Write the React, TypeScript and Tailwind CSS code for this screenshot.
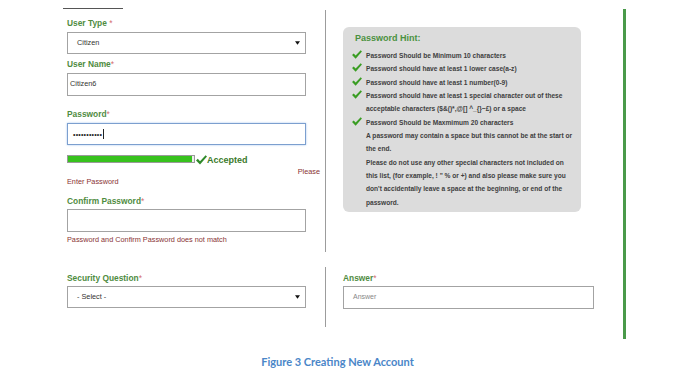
import React from "react";

const font = { fontFamily: '"Liberation Sans", Arial, sans-serif' };

const Check = ({ className }: { className?: string }) => (
	<svg viewBox="0 0 11 10" className={className}>
		<path d="M0 5.5 1.8 3.8 4 6.2 9.6 0.3 11 1.6 4 9.6Z" fill="currentColor" />
	</svg>
);

const Arrow = () => (
	<svg viewBox="0 0 6 4" className="w-[5px] h-[4px] text-[#111]">
		<path d="M0 0H6L3 4Z" fill="currentColor" />
	</svg>
);

const Label = ({ text }: { text: string }) => (
	<div className="h-[14px] leading-[14px] text-[8.4px] font-bold text-[#4f8c3f] whitespace-nowrap">
		{text}
		<span className="text-[#d46a6a] font-normal">*</span>
	</div>
);

const Select = ({ value }: { value: string }) => (
	<div className="w-[239px] h-[22px] border border-[#a3a3a3] bg-white flex items-center justify-between pl-[9px] pr-[5px]">
		<span className="text-[7.3px] text-[#333]">{value}</span>
		<Arrow />
	</div>
);

const hintItems: { check: boolean; lines: string[] }[] = [
	{ check: true, lines: ["Password Should be Minimum 10 characters"] },
	{ check: true, lines: ["Password should have at least 1 lower case(a-z)"] },
	{ check: true, lines: ["Password should have at least 1 number(0-9)"] },
	{
		check: true,
		lines: [
			"Password should have at least 1 special character out of these",
			"acceptable characters ($&()*,@[] ^_{}~£) or a space",
		],
	},
	{ check: true, lines: ["Password Should be Maxmimum 20 characters"] },
	{
		check: false,
		lines: ["A password may contain a space but this cannot be at the start or", "the end."],
	},
	{
		check: false,
		lines: [
			"Please do not use any other special characters not included on",
			"this list, (for example, ! \" % or +) and also please make sure you",
			"don't accidentally leave a space at the beginning, or end of the",
			"password.",
		],
	},
];

const App = () => {
	return (
		<div className="w-[696px] h-[373px] bg-white overflow-hidden" style={font}>
			<div className="flex">
				<div className="w-[623px]">
					{/* top part */}
					<div className="flex">
						<div className="w-[320px] pl-[67px]">
							<div className="-ml-[4px] w-[60px] h-[9px] border-b border-[#555]"></div>
							<div className="mt-[7px]">
								<div className="h-[14px] leading-[14px] text-[8.4px] font-bold text-[#4f8c3f] whitespace-nowrap">
									User Type <span className="text-[#d46a6a] font-normal">*</span>
								</div>
							</div>
							<div className="mt-[2px]">
								<Select value="Citizen" />
							</div>
							<div className="mt-[3px]">
								<Label text="User Name" />
							</div>
							<div className="mt-[2px] w-[239px] h-[23px] border border-[#a3a3a3] flex items-center pl-[2px] text-[7.3px] text-[#333]">
								Citizen6
							</div>
							<div className="mt-[11px]">
								<Label text="Password" />
							</div>
							<div className="mt-[2px] w-[239px] h-[22px] border border-[#7c9fcf] shadow-[0_0_2px_#a9c8ee] flex items-center pl-[5px]">
								<span className="text-[7px] text-[#222] tracking-[0.2px] leading-none">•••••••••••</span>
								<span className="ml-[1px] w-[1px] h-[10px] bg-[#222]"></span>
							</div>
							<div className="mt-[8px] flex items-center h-[12px]">
								<div className="w-[128px] h-[8px] border border-[#9a9a9a] bg-[#eee]">
									<div className="w-[124px] h-full bg-[#37c21d]"></div>
								</div>
								<Check className="ml-[1px] mt-[2px] w-[11px] h-[10px] text-[#2f8a2a]" />
								<span className="mt-[3px] text-[9px] font-bold text-[#3b7a2b] leading-none">Accepted</span>
							</div>
							<div className="mt-[1px] text-right text-[7.3px] text-[#8a3434] h-[12px] leading-[12px]">Please</div>
							<div className="text-[7.3px] text-[#8a3434] h-[12px] leading-[12px] mt-[-2px]">Enter Password</div>
							<div className="mt-[6px]">
								<Label text="Confirm Password" />
							</div>
							<div className="mt-[1px] w-[239px] h-[23px] border border-[#a3a3a3]"></div>
							<div className="mt-[1px] text-[7.3px] text-[#8a3434] h-[14px] leading-[14px]">
								Password and Confirm Password does not match
							</div>
						</div>
						<div className="ml-[5px] mt-[10px] h-[242px] w-[1px] bg-[#9c9c9c]"></div>
						<div className="ml-[17px] mt-[27px]">
							<div className="w-[238px] h-[185px] bg-[#dcdcdc] rounded-[6px] pl-[9px] pt-[5px]">
								<div className="ml-[3px] h-[12px] leading-[12px] text-[9px] font-bold text-[#4a9140]">
									Password Hint:
								</div>
								<div className="mt-[5px]">
									{hintItems.map((item, i) => (
										<div key={i} className="flex">
											<div className="w-[14px] shrink-0">
												{item.check && <Check className="w-[10px] h-[9px] mt-[1px] text-[#3a9d23]" />}
											</div>
											<div>
												{item.lines.map((line, j) => (
													<div
														key={j}
														className="whitespace-nowrap text-[6.6px] font-bold text-[#404040] leading-[13.35px]"
													>
														{line}
													</div>
												))}
											</div>
										</div>
									))}
								</div>
							</div>
						</div>
					</div>
					{/* bottom part */}
					<div className="flex">
						<div className="w-[320px] pl-[67px] pt-[19px]">
							<Label text="Security Question" />
							<div className="mt-[1px]">
								<Select value="- Select -" />
							</div>
						</div>
						<div className="ml-[5px] mt-[15px] h-[60px] w-[1px] bg-[#9c9c9c]"></div>
						<div className="ml-[17px] pt-[19px]">
							<Label text="Answer" />
							<div className="mt-[1px] w-[251px] h-[23px] border border-[#a3a3a3] flex items-center pl-[9px] text-[7px] text-[#888]">
								Answer
							</div>
						</div>
					</div>
				</div>
				<div className="mt-[9px] w-[3px] h-[330px] bg-[#4a9a4a]"></div>
			</div>
			<div
				className="w-[675px] mt-[16px] text-center text-[11px] font-bold leading-[14px] text-[#4a86c8]"
				style={{ fontFamily: 'Lato, "Open Sans", sans-serif' }}
			>
				Figure 3 Creating New Account
			</div>
		</div>
	);
};

export default App;
